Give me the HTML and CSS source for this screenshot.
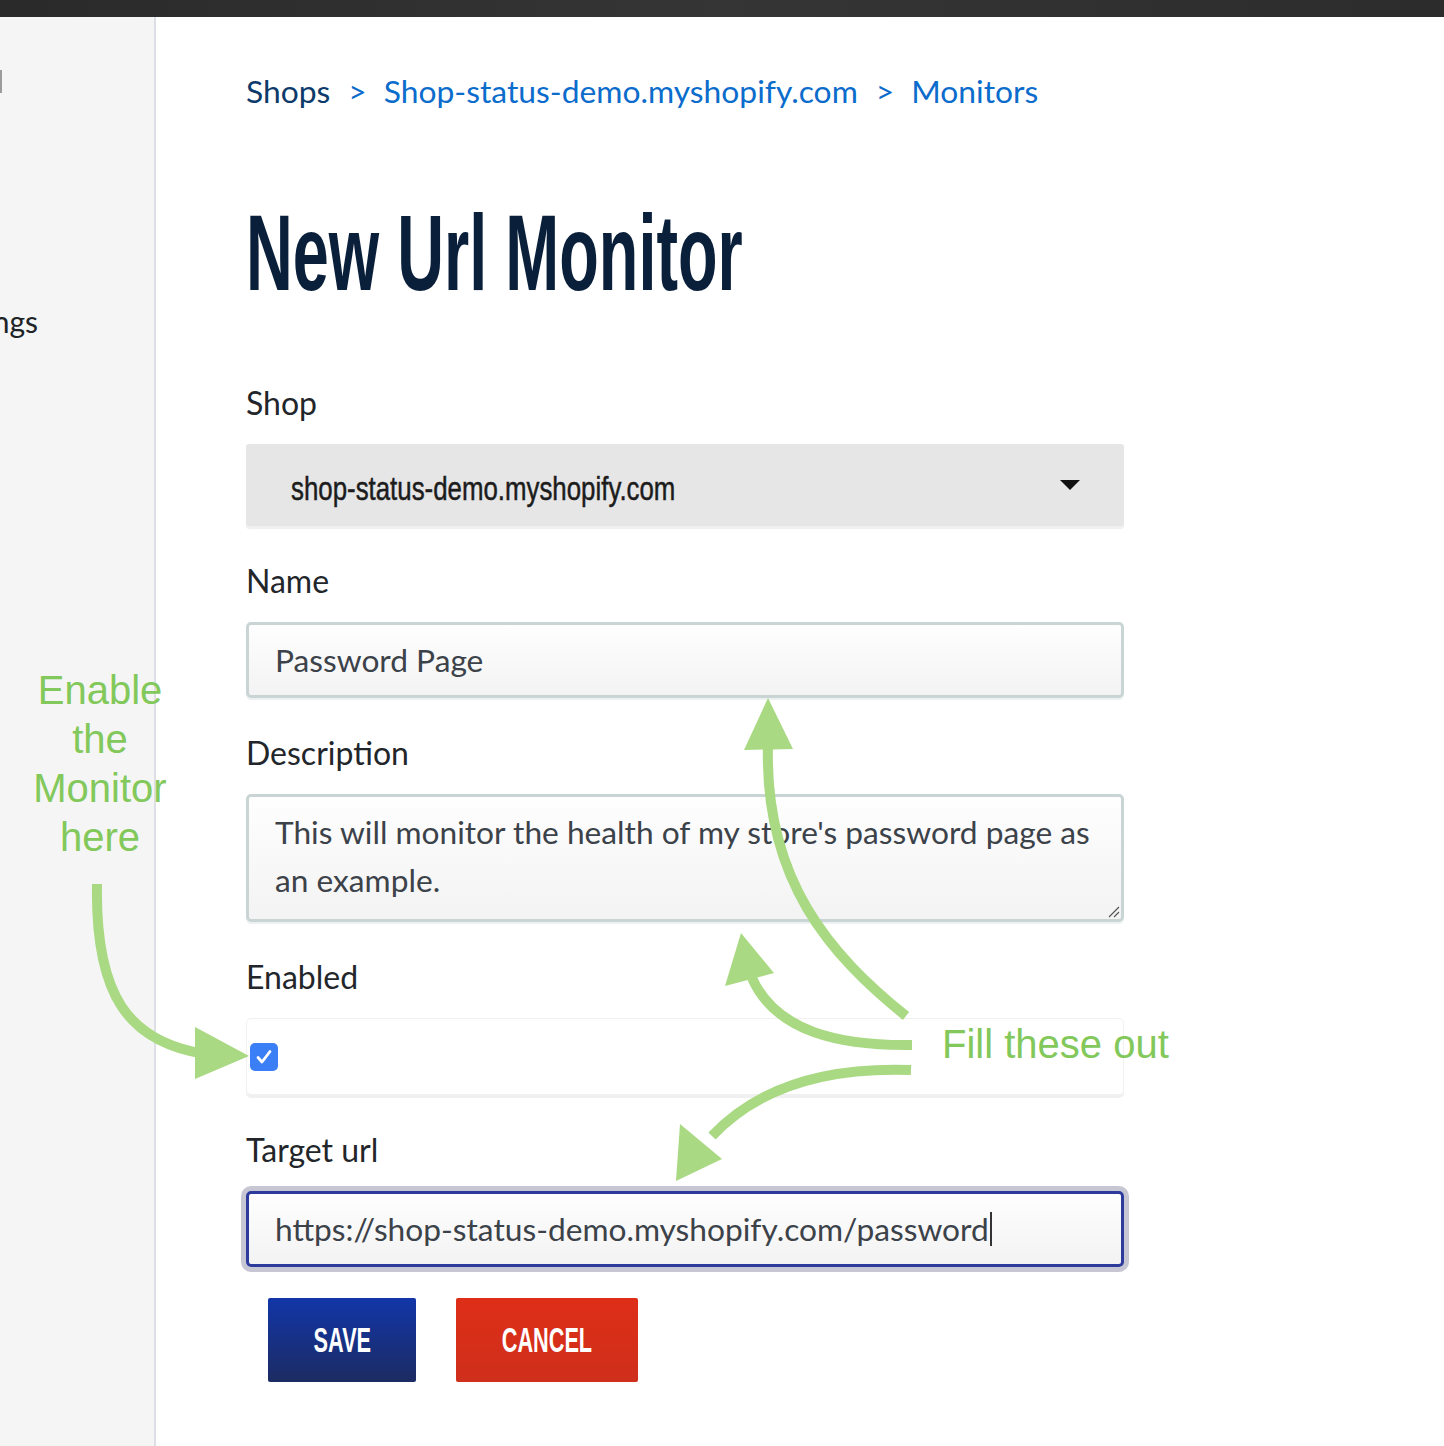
FILE: index.html
```html
<!DOCTYPE html>
<html lang="en">
<head>
<meta charset="utf-8">
<title>New Url Monitor</title>
<link rel="stylesheet" href="styles.css">
</head>
<body>
<div class="topbar"></div>
<div class="layout">
  <aside class="sidebar">
    <div class="side-mark"></div>
    <div class="side-item"><span>Settings</span></div>
  </aside>
  <main class="main">
    <nav class="crumbs">
      <a class="crumb crumb-root" href="#">Shops</a><span class="sep">&gt;</span><a class="crumb" href="#">Shop-status-demo.myshopify.com</a><span class="sep">&gt;</span><a class="crumb" href="#">Monitors</a>
    </nav>
    <h1 class="title"><span class="title-text">New Url Monitor</span></h1>
    <form class="form">
      <div class="group">
        <label class="label">Shop</label>
        <div class="select"><span class="select-text">shop-status-demo.myshopify.com</span><span class="select-caret"></span></div>
      </div>
      <div class="group">
        <label class="label">Name</label>
        <div class="input">Password Page</div>
      </div>
      <div class="group">
        <label class="label">Description</label>
        <div class="input textarea">This will monitor the health of my store's password page as an example.<svg class="resize" width="14" height="14" viewBox="0 0 14 14"><path d="M13 3 L3 13 M13 8 L8 13" stroke="#555" stroke-width="1.2" fill="none"/></svg></div>
      </div>
      <div class="group">
        <label class="label">Enabled</label>
        <div class="check-wrap">
          <span class="checkbox"><svg width="20" height="20" viewBox="0 0 20 20"><path d="M4 10.5 L8 15 L16 4.5" stroke="#fff" stroke-width="2.8" fill="none" stroke-linecap="round" stroke-linejoin="round"/></svg></span>
        </div>
      </div>
      <div class="group">
        <label class="label">Target url</label>
        <div class="input focused">https://shop-status-demo.myshopify.com/password<span class="text-caret"></span></div>
      </div>
      <div class="actions">
        <button type="button" class="btn btn-save"><span class="btn-text">SAVE</span></button>
        <button type="button" class="btn btn-cancel"><span class="btn-text">CANCEL</span></button>
      </div>
    </form>
  </main>
</div>

<svg class="arrows" width="1444" height="1446" viewBox="0 0 1444 1446">
  <g fill="none" stroke="#a9d982" stroke-width="10">
    <path d="M97 884 C 95 995, 128 1042, 205 1054"/>
    <path d="M906 1016 C 830 955, 764 880, 768 744"/>
    <path d="M912 1045 C 840 1046, 776 1032, 752 978"/>
    <path d="M911 1070 C 830 1067, 760 1085, 712 1136"/>
  </g>
  <g fill="#a9d982">
    <polygon points="195,1027 249,1056 195,1079"/>
    <polygon points="768,698 744,750 793,749"/>
    <polygon points="741,933 725,986 774,973"/>
    <polygon points="676,1181 680,1124 722,1159"/>
  </g>
</svg>
<div class="note note-enable">Enable<br>the<br>Monitor<br>here</div>
<div class="note note-fill">Fill these out</div>
</body>
</html>
```

FILE: styles.css
```css
html, body {
  margin: 0;
  padding: 0;
}
body {
  position: relative;
  width: 1444px;
  height: 1446px;
  overflow: hidden;
  background: #ffffff;
  font-family: "Lato", "Open Sans", sans-serif;
  color: #22262a;
}
.topbar {
  height: 17px;
  background: linear-gradient(to right, #2a2a2a, #353535 50%, #2c2c2c);
}
.layout {
  display: flex;
  height: 1429px;
}
.sidebar {
  width: 154px;
  flex: none;
  background: #f5f5f5;
  border-right: 2px solid #dce0e6;
  overflow: hidden;
}
.side-mark {
  margin-top: 53px;
  width: 2px;
  height: 23px;
  background: #9c9c9c;
}
.side-item {
  margin-top: 208px;
  width: 38px;
  display: flex;
  justify-content: flex-end;
  white-space: nowrap;
  font-size: 30px;
  line-height: 40px;
  color: #1d2327;
}
.main {
  flex: 1;
  padding: 54px 0 0 90px;
}
.crumbs {
  font-size: 31.8px;
  line-height: 40px;
  white-space: nowrap;
}
.crumb {
  color: #0b6ccc;
  text-decoration: none;
}
.crumb-root {
  color: #0c3a6a;
}
.sep {
  color: #0b6ccc;
  margin: 0 17px 0 18px;
}
.title {
  margin: 88px 0 0;
  height: 108px;
  font-family: "Liberation Sans", Arial, sans-serif;
  font-weight: 700;
  font-size: 108px;
  line-height: 108px;
  color: #0a1f3a;
  white-space: nowrap;
}
.title-text {
  display: inline-block;
  transform: scaleX(0.6);
  transform-origin: left center;
}
.form {
  margin-top: 76px;
  width: 878px;
}
.group {
  margin-bottom: 35px;
}
.label {
  display: block;
  font-size: 32px;
  line-height: 40px;
  margin-bottom: 21px;
  color: #22262a;
}
.select {
  height: 82px;
  box-sizing: border-box;
  background: #e6e6e6;
  border-radius: 3px;
  box-shadow: 0 3px 0 #f0f0f0;
  display: flex;
  align-items: center;
  justify-content: space-between;
  padding: 6px 44px 0 45px;
}
.select-text {
  display: inline-block;
  font-family: "Liberation Sans", Arial, sans-serif;
  font-size: 34px;
  color: #1c1c1c;
  -webkit-text-stroke: 0.5px #1c1c1c;
  transform: scaleX(0.76);
  transform-origin: left center;
  white-space: nowrap;
}
.select-caret {
  width: 0;
  height: 0;
  margin-top: -6px;
  border-left: 10px solid transparent;
  border-right: 10px solid transparent;
  border-top: 10px solid #111;
}
.input {
  position: relative;
  height: 76px;
  box-sizing: border-box;
  border: 3px solid #c9d5d5;
  border-radius: 5px;
  background: linear-gradient(#fefefe, #f3f3f3);
  box-shadow: 0 2px 0 #eef1f1;
  padding: 0 26px;
  display: flex;
  align-items: center;
  font-size: 31.7px;
  color: #3c4249;
  white-space: nowrap;
}
.textarea {
  height: 128px;
  display: block;
  padding-top: 11px;
  line-height: 48px;
  white-space: normal;
}
.resize {
  position: absolute;
  right: 1px;
  bottom: 1px;
}
.check-wrap {
  height: 77px;
  box-sizing: border-box;
  border: 1px solid #f1f1f1;
  border-radius: 5px;
  box-shadow: 0 3px 0 #f0f0f0;
  display: flex;
  align-items: center;
  padding-left: 3px;
}
.checkbox {
  width: 28px;
  height: 28px;
  border-radius: 5px;
  background: #3a7ff6;
  display: flex;
  align-items: center;
  justify-content: center;
}
.focused {
  border-color: #2c3b9c;
  box-shadow: 0 0 0 5px #c6c7d3;
}
.text-caret {
  display: inline-block;
  width: 2px;
  height: 34px;
  margin-left: 1px;
  background: #333;
}
.actions {
  margin-top: -4px;
  padding-left: 22px;
  display: flex;
  gap: 40px;
}
.btn {
  height: 84px;
  border: none;
  border-radius: 2px;
  padding: 0;
  display: inline-flex;
  align-items: center;
  justify-content: center;
  font-family: "Liberation Sans", Arial, sans-serif;
  font-weight: 700;
  font-size: 35px;
  color: #ffffff;
  cursor: pointer;
}
.btn-text {
  display: inline-block;
  transform: scaleX(0.62);
}
.btn-save {
  width: 148px;
  background: linear-gradient(#1236a8, #1c2b62);
}
.btn-cancel {
  width: 182px;
  background: linear-gradient(#de2e17, #cf2f1b);
}
.arrows {
  position: absolute;
  left: 0;
  top: 0;
  pointer-events: none;
}
.note {
  position: absolute;
  font-family: "Liberation Sans", Arial, sans-serif;
  font-size: 40px;
  line-height: 49px;
  color: #82c85a;
  white-space: nowrap;
}
.note-enable {
  left: 20px;
  top: 666px;
  width: 160px;
  text-align: center;
}
.note-fill {
  left: 942px;
  top: 1020px;
}
```
